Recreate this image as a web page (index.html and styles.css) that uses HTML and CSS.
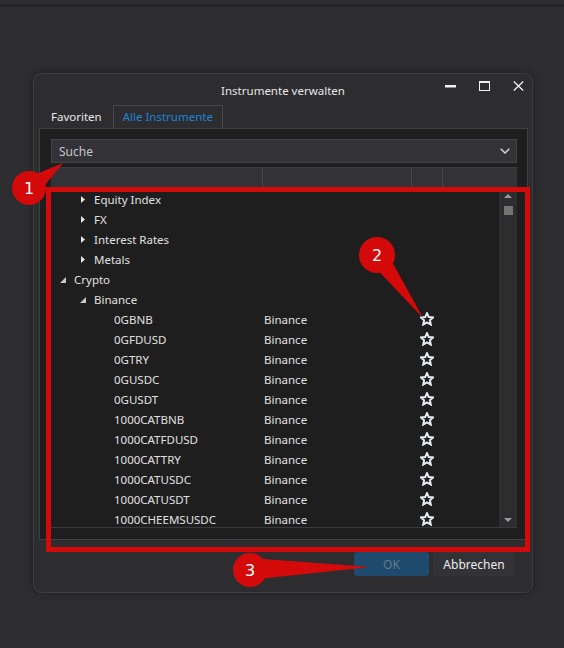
FILE: index.html
```html
<!DOCTYPE html>
<html lang="de">
<head>
  <meta charset="UTF-8">
  <title>Instrumente verwalten</title>
  <link rel="stylesheet" href="styles.css">
</head>
<body>
  <!-- shared icons -->
  <svg class="defs" width="0" height="0">
    <symbol id="star" viewBox="0 0 14 14">
      <polygon points="7,1.2 8.8,5.1 13,5.5 9.9,8.3 10.8,12.6 7,10.4 3.2,12.6 4.1,8.3 1,5.5 5.2,5.1"
               fill="none" stroke="#e6eaef" stroke-width="2" stroke-linejoin="miter"/>
    </symbol>
    <symbol id="closed" viewBox="0 0 4 7">
      <polygon points="0,0 4,3.5 0,7" fill="#e4e4e4"/>
    </symbol>
    <symbol id="open" viewBox="0 0 6 6">
      <polygon points="6,0 6,6 0,6" fill="#c8c8c8"/>
    </symbol>
  </svg>

  <div class="topline"></div>

  <div class="dialog">
    <div class="titlebar">
      <span></span>
      <span class="title">Instrumente verwalten</span>
      <div class="controls">
        <span class="ctl"><svg width="11" height="11" viewBox="0 0 11 11"><rect x="0" y="4" width="11" height="2.5" fill="#f0f0f0"/></svg></span>
        <span class="ctl"><svg width="11" height="10" viewBox="0 0 11 10"><rect x="0.5" y="0.5" width="10" height="9" fill="none" stroke="#f0f0f0"/><rect x="0" y="0" width="11" height="2" fill="#f0f0f0"/></svg></span>
        <span class="ctl"><svg width="11" height="10" viewBox="0 0 11 10"><path d="M0.8 0.5 L10.2 9.5 M10.2 0.5 L0.8 9.5" stroke="#f0f0f0" stroke-width="1.3"/></svg></span>
      </div>
    </div>

    <div class="tabs">
      <div class="tab">Favoriten</div>
      <div class="tab active">Alle Instrumente</div>
    </div>

    <div class="panel">
      <div class="search">
        <span>Suche</span>
        <svg width="10" height="6" viewBox="0 0 10 6"><path d="M0.7 0.7 L5 5 L9.3 0.7" fill="none" stroke="#d4d4d4" stroke-width="1.5"/></svg>
      </div>

      <div class="grid">
        <div class="grid-head">
          <div class="hc c1"></div>
          <div class="hc c2"></div>
          <div class="hc c3"></div>
          <div class="hc c4"></div>
        </div>
        <div class="grid-body">
          <div class="rows">
            <div class="row lvl2"><span class="name"><svg class="exp closed"><use href="#closed"/></svg>Equity Index</span></div>
            <div class="row lvl2"><span class="name"><svg class="exp closed"><use href="#closed"/></svg>FX</span></div>
            <div class="row lvl2"><span class="name"><svg class="exp closed"><use href="#closed"/></svg>Interest Rates</span></div>
            <div class="row lvl2"><span class="name"><svg class="exp closed"><use href="#closed"/></svg>Metals</span></div>
            <div class="row lvl1"><span class="name"><svg class="exp open"><use href="#open"/></svg>Crypto</span></div>
            <div class="row lvl2"><span class="name"><svg class="exp open"><use href="#open"/></svg>Binance</span></div>
            <div class="row lvl3"><span class="name">0GBNB</span><span class="exch">Binance</span><span class="fav"><svg><use href="#star"/></svg></span></div>
            <div class="row lvl3"><span class="name">0GFDUSD</span><span class="exch">Binance</span><span class="fav"><svg><use href="#star"/></svg></span></div>
            <div class="row lvl3"><span class="name">0GTRY</span><span class="exch">Binance</span><span class="fav"><svg><use href="#star"/></svg></span></div>
            <div class="row lvl3"><span class="name">0GUSDC</span><span class="exch">Binance</span><span class="fav"><svg><use href="#star"/></svg></span></div>
            <div class="row lvl3"><span class="name">0GUSDT</span><span class="exch">Binance</span><span class="fav"><svg><use href="#star"/></svg></span></div>
            <div class="row lvl3"><span class="name">1000CATBNB</span><span class="exch">Binance</span><span class="fav"><svg><use href="#star"/></svg></span></div>
            <div class="row lvl3"><span class="name">1000CATFDUSD</span><span class="exch">Binance</span><span class="fav"><svg><use href="#star"/></svg></span></div>
            <div class="row lvl3"><span class="name">1000CATTRY</span><span class="exch">Binance</span><span class="fav"><svg><use href="#star"/></svg></span></div>
            <div class="row lvl3"><span class="name">1000CATUSDC</span><span class="exch">Binance</span><span class="fav"><svg><use href="#star"/></svg></span></div>
            <div class="row lvl3"><span class="name">1000CATUSDT</span><span class="exch">Binance</span><span class="fav"><svg><use href="#star"/></svg></span></div>
            <div class="row lvl3"><span class="name">1000CHEEMSUSDC</span><span class="exch">Binance</span><span class="fav"><svg><use href="#star"/></svg></span></div>
          </div>
          <div class="scrollbar">
            <div class="sb-btn"><svg width="8" height="4" viewBox="0 0 8 4"><polygon points="0,4 4,0 8,4" fill="#9a9a9a"/></svg></div>
            <div class="thumb"></div>
            <div class="sb-fill"></div>
            <div class="sb-btn"><svg width="8" height="4" viewBox="0 0 8 4"><polygon points="0,0 8,0 4,4" fill="#9a9a9a"/></svg></div>
          </div>
        </div>
      </div>
    </div>

    <div class="footer">
      <button class="btn ok">OK</button>
      <button class="btn">Abbrechen</button>
    </div>
  </div>

  <!-- red annotation marks on top of the screenshot -->
  <svg class="marks" width="564" height="648" viewBox="0 0 564 648">
    <rect x="48.5" y="189.5" width="479" height="360" fill="none" stroke="#d40909" stroke-width="5"/>
    <polygon points="22,180 63,163 36,196" fill="#d40909"/>
    <circle cx="29" cy="188" r="17" fill="#d40909"/>
    <text x="29" y="194" class="num">1</text>
    <polygon points="385,249 423,318 369,261" fill="#d40909"/>
    <circle cx="377" cy="255" r="18" fill="#d40909"/>
    <text x="377" y="261" class="num">2</text>
    <polygon points="250,558 370,567 250,580" fill="#d40909"/>
    <circle cx="250" cy="570" r="17" fill="#d40909"/>
    <text x="250" y="576" class="num">3</text>
  </svg>
</body>
</html>
```

FILE: styles.css
```css
/* General */
body {
  margin: 0;
  width: 564px;
  height: 648px;
  overflow: hidden;
  background: #2d2d30;
  font-family: 'Noto Sans', 'Open Sans', sans-serif;
  font-size: 11.5px;
  color: #e0e0e0;
  position: relative;
}

.defs {
  position: absolute;
}

.topline {
  height: 5px;
  border-bottom: 1px solid #1c1c1f;
}

/* Dialog */
.dialog {
  width: 500px;
  height: 520px;
  box-sizing: border-box;
  margin: 67px 0 0 33px;
  background: #2d2d30;
  border: 1px solid #3d3d41;
  border-radius: 8px;
  box-shadow: 0 0 6px rgba(0, 0, 0, 0.35);
  display: flex;
  flex-direction: column;
}

.titlebar {
  height: 31px;
  display: grid;
  grid-template-columns: 1fr auto 1fr;
  align-items: center;
}

.title {
  font-size: 11.5px;
  color: #e6e6e6;
  padding-top: 1px;
}

.controls {
  display: flex;
  justify-content: flex-end;
  margin-right: -3px;
  margin-top: -6px;
}

.ctl {
  width: 34px;
  display: flex;
  justify-content: center;
}

/* Tabs */
.tabs {
  height: 23px;
  display: flex;
  align-items: flex-end;
  padding-left: 6px;
}

.tab {
  padding: 0 11px;
  height: 22px;
  line-height: 22px;
  font-size: 11.5px;
  color: #e8e8e8;
}

.tab.active {
  color: #1b84d8;
  border: 1px solid #45454b;
  border-bottom: none;
  line-height: 21px;
  padding: 0 9px;
}

.panel {
  height: 412px;
  box-sizing: border-box;
  margin: 0 4px 0 5px;
  padding: 10px 10px 0 11px;
  background: #1e1e1e;
  border: 1px solid #3f3f46;
}

.search {
  height: 24px;
  box-sizing: border-box;
  background: #333337;
  border: 1px solid #434347;
  display: flex;
  align-items: center;
  justify-content: space-between;
  padding: 0 6px 0 7px;
  color: #c6c6c6;
  font-size: 12px;
}

/* Grid */
.grid {
  margin-top: 4px;
}

.grid-head {
  height: 22px;
  display: grid;
  grid-template-columns: 211px 149px 31px 1fr;
  background: #333337;
  border-top: 1px solid #3c3c40;
  box-sizing: border-box;
}

.hc + .hc {
  border-left: 1px solid #46464b;
}

.grid-body {
  height: 339px;
  box-sizing: border-box;
  border-bottom: 1px solid #3a3a3e;
  display: flex;
  overflow: hidden;
}

.rows {
  width: 448px;
}

.row {
  height: 20px;
  display: grid;
  grid-template-columns: 211px 149px 31px;
  align-items: center;
}

.name {
  display: flex;
  align-items: center;
  white-space: nowrap;
}

.lvl1 .name { padding-left: 6px; }
.lvl2 .name { padding-left: 26px; }
.lvl3 .name { padding-left: 63px; }

.exp {
  flex: none;
}

.exp.closed {
  width: 4px;
  height: 7px;
  margin: 1px 9px 0 4px;
}

.exp.open {
  width: 6px;
  height: 6px;
  margin: 1px 8px 0 3px;
}

.exch {
  padding-left: 2px;
}

.fav {
  display: flex;
  justify-content: center;
}

.fav svg {
  width: 14px;
  height: 14px;
  margin-left: 1px;
}

/* Scrollbar */
.scrollbar {
  width: 18px;
  background: #2d2d30;
  display: flex;
  flex-direction: column;
  align-items: center;
}

.sb-btn {
  height: 14px;
  display: flex;
  align-items: center;
  justify-content: center;
}

.thumb {
  width: 9px;
  height: 9px;
  margin-top: 3px;
  background: #747474;
}

.sb-fill {
  flex: 1;
}

/* Footer */
.footer {
  flex: 1;
  display: flex;
  justify-content: flex-end;
  align-items: flex-start;
  gap: 4px;
  padding: 12px 17px 0 0;
}

.btn {
  height: 24px;
  border: none;
  border-radius: 3px;
  font-family: 'Noto Sans', 'Open Sans', sans-serif;
  font-size: 12px;
  background: #333337;
  color: #ececec;
  width: 82px;
  padding: 0;
}

.btn.ok {
  width: 75px;
  background: #1d4a6d;
  color: #667b8d;
}

/* Annotations */
.marks {
  position: absolute;
  left: 0;
  top: 0;
}

.num {
  font-family: 'DejaVu Sans', sans-serif;
  font-size: 16px;
  fill: #ffffff;
  text-anchor: middle;
}
```
